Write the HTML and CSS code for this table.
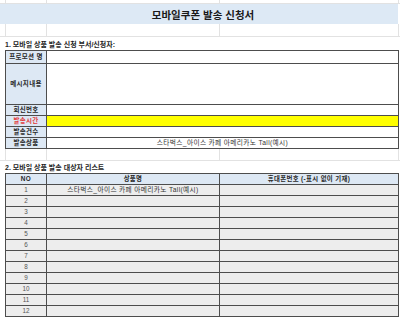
FILE: index.html
```html
<!DOCTYPE html>
<html lang="ko">
<head>
<meta charset="utf-8">
<title>모바일쿠폰 발송 신청서</title>
<link rel="stylesheet" href="styles.css">
</head>
<body>
<div class="sheet">
  <div class="gridrow top"><i></i><i></i><i></i><i></i><i></i></div>
  <div class="title"><span>모바일쿠폰 발송 신청서</span></div>
  <div class="gridrow blank"><i></i><i></i><i></i><i></i><i></i></div>
  <div class="heading">1. 모바일 상품 발송 신청 부서/신청자:</div>
  <div class="form">
    <div class="label">프로모션 명</div><div class="value"></div>
    <div class="label">메시지내용</div><div class="value"></div>
    <div class="label">회신번호</div><div class="value"></div>
    <div class="label red">발송시간</div><div class="value yellow"></div>
    <div class="label">발송건수</div><div class="value"></div>
    <div class="label">발송상품</div><div class="value text">스타벅스_아이스 카페 아메리카노 Tall(예시)</div>
  </div>
  <div class="gridrow gap"><i></i><i></i><i></i><i></i><i></i></div>
  <div class="heading h2">2. 모바일 상품 발송 대상자 리스트</div>
  <div class="list">
    <div class="head">NO</div><div class="head">상품명</div><div class="head">휴대폰번호 (-표시 없이 기재)</div>
    <div class="cell num">1</div><div class="cell">스타벅스_아이스 카페 아메리카노 Tall(예시)</div><div class="cell"></div>
    <div class="cell num">2</div><div class="cell"></div><div class="cell"></div>
    <div class="cell num">3</div><div class="cell"></div><div class="cell"></div>
    <div class="cell num">4</div><div class="cell"></div><div class="cell"></div>
    <div class="cell num">5</div><div class="cell"></div><div class="cell"></div>
    <div class="cell num">6</div><div class="cell"></div><div class="cell"></div>
    <div class="cell num">7</div><div class="cell"></div><div class="cell"></div>
    <div class="cell num">8</div><div class="cell"></div><div class="cell"></div>
    <div class="cell num">9</div><div class="cell"></div><div class="cell"></div>
    <div class="cell num">10</div><div class="cell"></div><div class="cell"></div>
    <div class="cell num">11</div><div class="cell"></div><div class="cell"></div>
    <div class="cell num">12</div><div class="cell"></div><div class="cell"></div>
  </div>
</div>
</body>
</html>
```
FILE: styles.css
```css
* { box-sizing: border-box; }
html, body { margin: 0; padding: 0; background: #ffffff; }
body {
  font-family: "Liberation Sans", "Noto Sans CJK KR", sans-serif;
  color: #222;
  width: 400px;
  height: 319px;
  overflow: hidden;
}
.sheet { width: 400px; }

.gridrow {
  display: grid;
  grid-template-columns: 5px 41px 173px 179px 1fr;
  border-bottom: 1px solid #e2e2e2;
}
.gridrow i { display: block; border-left: 1px solid #e2e2e2; }
.gridrow i:first-child { border-left: none; }
.gridrow.top { height: 4px; }
.gridrow.blank { height: 13px; }
.gridrow.gap { height: 12px; }

.title {
  height: 20px;
  width: 398px;
  background: #dde9f5;
  padding-left: 5px;
  display: flex;
  align-items: center;
  justify-content: center;
  font-size: 10.5px;
  font-weight: bold;
  color: #1a1a1a;
}
.title span { padding-left: 3px; }

.heading {
  height: 13px;
  padding-left: 5px;
  display: flex;
  align-items: center;
  font-size: 7px;
  font-weight: bold;
  color: #1e1e1e;
  white-space: nowrap;
}
.heading.h2 { height: 12px; }

.form {
  margin-left: 5px;
  width: 394px;
  display: grid;
  grid-template-columns: 40px 1fr;
  grid-template-rows: 12px 40px 10px 10px 10px 10px;
  gap: 1px;
  background: #4d4d4d;
  border: 1px solid #4d4d4d;
}
.label {
  background: #dde8f4;
  display: flex;
  align-items: center;
  justify-content: center;
  font-size: 6.5px;
  font-weight: bold;
  color: #2a2a2a;
  white-space: nowrap;
  line-height: 1;
  letter-spacing: 0.3px;
}
.label.red { color: #e23b3b; }
.value { background: #ffffff; }
.value.yellow { background: #ffff00; }
.value.text {
  display: flex;
  align-items: center;
  justify-content: center;
  font-size: 6.7px;
  color: #333;
  white-space: nowrap;
  line-height: 1;
  letter-spacing: 0.35px;
}

.list {
  margin-left: 5px;
  width: 394px;
  display: grid;
  grid-template-columns: 40px 172px 1fr;
  grid-auto-rows: 10px;
  gap: 1px;
  background: #4d4d4d;
  border: 1px solid #4d4d4d;
}
.head {
  background: #dde8f4;
  display: flex;
  align-items: center;
  justify-content: center;
  font-size: 6.4px;
  font-weight: bold;
  color: #2a2a2a;
  white-space: nowrap;
  line-height: 1;
  letter-spacing: 0.35px;
}
.cell {
  background: #ededed;
  display: flex;
  align-items: center;
  justify-content: center;
  font-size: 6.7px;
  color: #333;
  white-space: nowrap;
  line-height: 1;
  letter-spacing: 0.35px;
}
.cell.num { color: #555; font-size: 6.3px; letter-spacing: 0; }
```
